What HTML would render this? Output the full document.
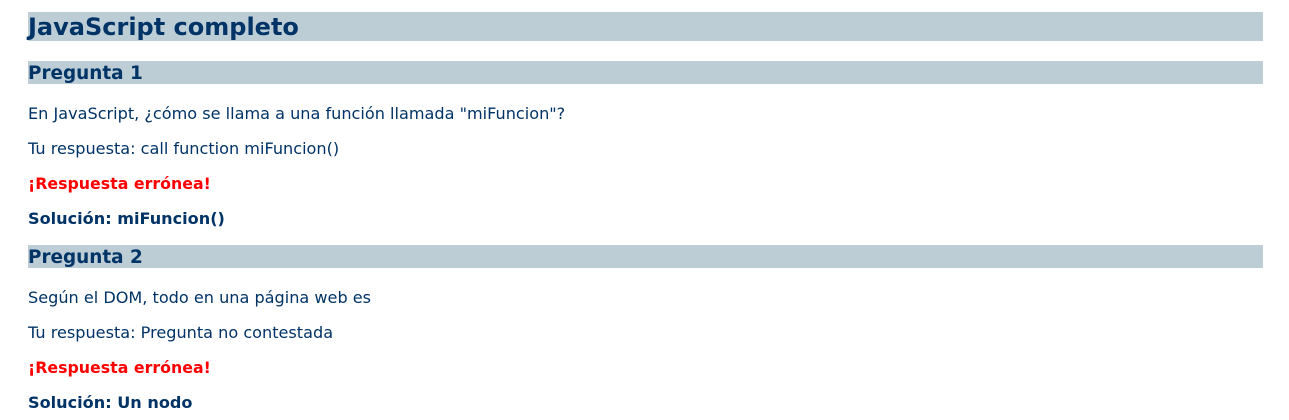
<!DOCTYPE html>
<html><head><meta charset="utf-8"><style>
body{margin:0;width:1289px;height:420px;background:#fff;font-family:"DejaVu Sans","Liberation Sans",sans-serif;color:#003366;position:relative;overflow:hidden}
.b{position:absolute;left:28px;width:1235px;background:#bccdd6;font-weight:bold;white-space:nowrap}
.h1{top:12px;height:29px;font-size:24px;line-height:30px}
.h2{height:23px;font-size:18.4px;line-height:25px}
.t{position:absolute;left:28px;font-size:16.1px;line-height:20px;white-space:nowrap}
.r{color:#ff0000;font-weight:bold;font-size:15.8px}
.s{font-weight:bold}
</style></head><body>
<div class="b h1">JavaScript completo</div>
<div class="b h2" style="top:61px">Pregunta 1</div>
<div class="t" style="top:104px">En JavaScript, ¿cómo se llama a una función llamada "miFuncion"?</div>
<div class="t" style="top:139px">Tu respuesta: call function miFuncion()</div>
<div class="t r" style="top:174px">¡Respuesta errónea!</div>
<div class="t s" style="top:209px">Solución: miFuncion()</div>
<div class="b h2" style="top:245px">Pregunta 2</div>
<div class="t" style="top:288px">Según el DOM, todo en una página web es</div>
<div class="t" style="top:323px">Tu respuesta: Pregunta no contestada</div>
<div class="t r" style="top:358px">¡Respuesta errónea!</div>
<div class="t s" style="top:393px">Solución: Un nodo</div>
</body></html>
